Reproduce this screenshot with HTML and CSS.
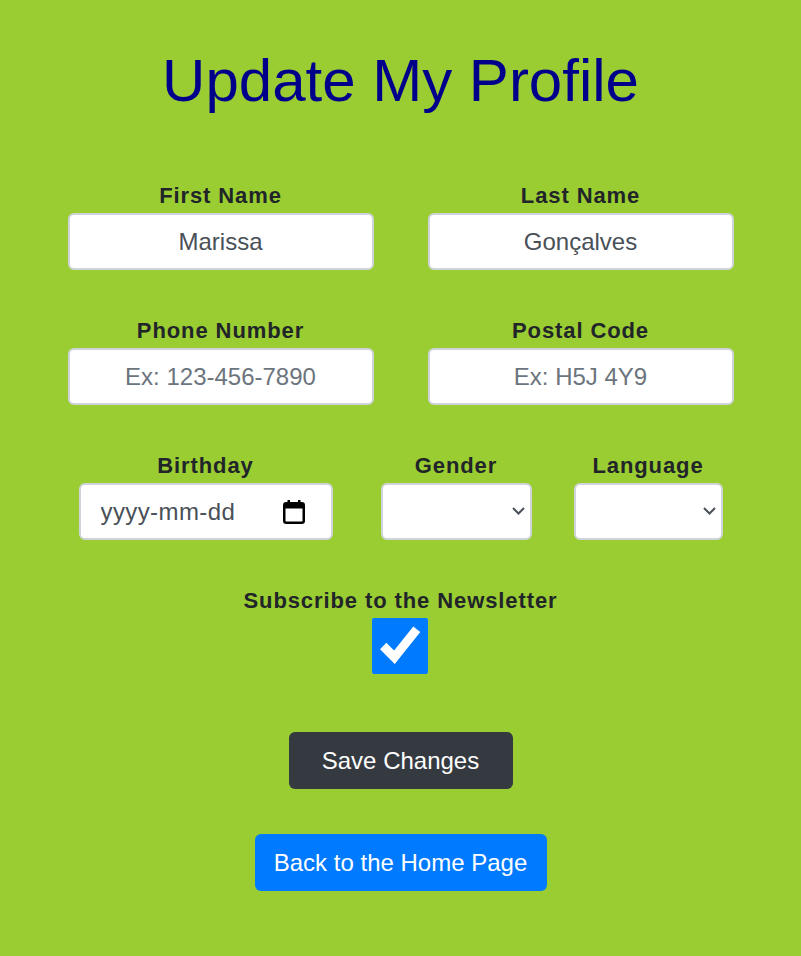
FILE: index.html
```html
<!DOCTYPE html>
<html lang="en">
<head>
<meta charset="utf-8">
<title>Update My Profile</title>
<link rel="stylesheet" href="styles.css">
</head>
<body>
<main class="page">
  <h1 class="title">Update My Profile</h1>
  <form class="form">
    <div class="row row-2">
      <div class="field">
        <label class="label" for="fn">First Name</label>
        <input class="control control-text" id="fn" type="text" value="Marissa">
      </div>
      <div class="field">
        <label class="label" for="ln">Last Name</label>
        <input class="control control-text" id="ln" type="text" value="Gonçalves">
      </div>
    </div>
    <div class="row row-2">
      <div class="field">
        <label class="label" for="ph">Phone Number</label>
        <input class="control control-text" id="ph" type="text" placeholder="Ex: 123-456-7890">
      </div>
      <div class="field">
        <label class="label" for="pc">Postal Code</label>
        <input class="control control-text" id="pc" type="text" placeholder="Ex: H5J 4Y9">
      </div>
    </div>
    <div class="row row-3">
      <div class="field">
        <label class="label" for="bd">Birthday</label>
        <div class="control date-control">
          <input class="date-input" id="bd" type="text" placeholder="yyyy-mm-dd">
          <svg class="cal-icon" width="22" height="24" viewBox="0 0 22 24" aria-hidden="true">
            <rect x="1.25" y="3.25" width="19.5" height="19.5" rx="2" fill="none" stroke="#000" stroke-width="2.5"/>
            <rect x="1" y="3" width="20" height="5.5" fill="#000"/>
            <rect x="4.5" y="0" width="2.5" height="4" fill="#000"/>
            <rect x="15" y="0" width="2.5" height="4" fill="#000"/>
          </svg>
        </div>
      </div>
      <div class="field field-gender">
        <label class="label" for="gd">Gender</label>
        <div class="select-wrap">
          <select class="control control-select control-gender" id="gd"><option></option></select>
          <svg class="chev" width="13" height="8" viewBox="0 0 13 8" aria-hidden="true"><path d="M1 1l5.5 5.5L12 1" fill="none" stroke="#495057" stroke-width="2"/></svg>
        </div>
      </div>
      <div class="field">
        <label class="label" for="lg">Language</label>
        <div class="select-wrap">
          <select class="control control-select control-lang" id="lg"><option></option></select>
          <svg class="chev" width="13" height="8" viewBox="0 0 13 8" aria-hidden="true"><path d="M1 1l5.5 5.5L12 1" fill="none" stroke="#495057" stroke-width="2"/></svg>
        </div>
      </div>
    </div>
    <div class="field field-check">
      <label class="label" for="nl">Subscribe to the Newsletter</label>
      <input class="check" id="nl" type="checkbox" checked>
    </div>
    <button class="btn btn-save" type="button">Save Changes</button>
  </form>
  <a class="btn btn-home" href="#">Back to the Home Page</a>
</main>
</body>
</html>
```

FILE: styles.css
```css
html, body {
  margin: 0;
  background: #9acd32;
}
body {
  font-family: "Liberation Sans", Arial, sans-serif;
  color: #212529;
  min-height: 956px;
}
.page {
  display: flex;
  flex-direction: column;
  align-items: center;
  padding-top: 45px;
}
.title {
  margin: 0;
  font-size: 60px;
  line-height: 72px;
  font-weight: 400;
  color: #00008b;
}
.form {
  display: flex;
  flex-direction: column;
  align-items: center;
  margin-top: 66px;
}
.row {
  display: flex;
  justify-content: center;
}
.row-2 {
  gap: 54px;
  margin-bottom: 48px;
}
.row-3 {
  margin-bottom: 48px;
}
.field {
  display: flex;
  flex-direction: column;
  align-items: center;
}
.field-gender {
  margin: 0 42px 0 48px;
}
.label {
  font-size: 22px;
  font-weight: 700;
  line-height: 26px;
  letter-spacing: 0.9px;
  margin-bottom: 4px;
}
.control {
  box-sizing: border-box;
  height: 57px;
  border: 2px solid #ced4da;
  border-radius: 6px;
  background: #fff;
  font-family: "Liberation Sans", Arial, sans-serif;
  font-size: 24px;
  color: #495057;
  text-align: center;
  padding: 0 18px;
  margin: 0;
}
.control::placeholder {
  color: #6c757d;
  opacity: 1;
}
.control-text {
  width: 306px;
}
.date-control {
  width: 254px;
  display: flex;
  align-items: center;
  justify-content: space-between;
  padding: 0 26px 0 20px;
}
.date-input {
  width: 150px;
  border: 0;
  padding: 0;
  margin: 0;
  outline: none;
  background: transparent;
  font-family: "Liberation Sans", Arial, sans-serif;
  font-size: 24px;
  letter-spacing: 0.4px;
  color: #495057;
}
.date-input::placeholder {
  color: #495057;
  opacity: 1;
}
.cal-icon {
  flex: none;
  display: block;
}
.select-wrap {
  position: relative;
  display: flex;
}
.control-select {
  appearance: none;
  -webkit-appearance: none;
}
.control-gender {
  width: 151px;
}
.control-lang {
  width: 149px;
}
.chev {
  position: absolute;
  right: 7px;
  top: 24px;
  pointer-events: none;
}
.field-check {
  margin-bottom: 58px;
}
.check {
  width: 56px;
  height: 56px;
  margin: 0;
  accent-color: #007bff;
}
.btn {
  box-sizing: border-box;
  display: inline-flex;
  align-items: center;
  justify-content: center;
  height: 57px;
  border: 0;
  border-radius: 6px;
  font-family: "Liberation Sans", Arial, sans-serif;
  font-size: 24px;
  color: #fff;
  text-decoration: none;
  padding: 0;
}
.btn-save {
  width: 224px;
  background: #343a40;
}
.btn-home {
  width: 292px;
  margin-top: 45px;
  background: #007bff;
}
```
